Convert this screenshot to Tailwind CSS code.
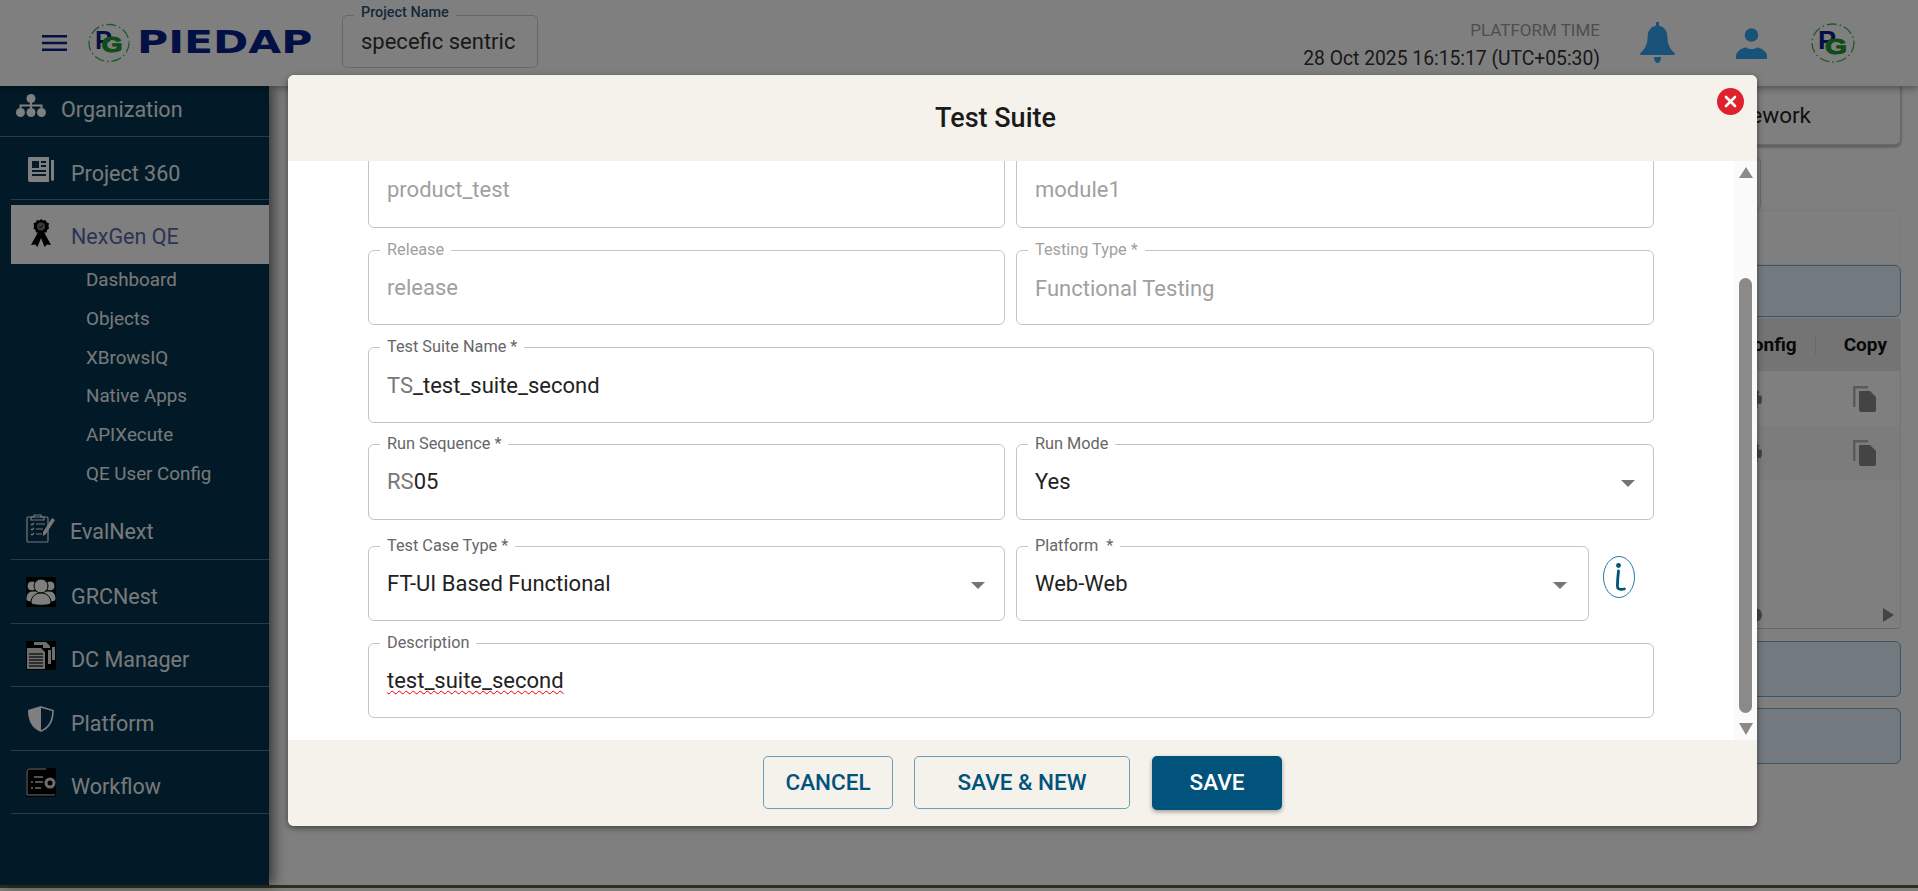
<!DOCTYPE html>
<html lang="en">
<head>
<meta charset="UTF-8">
<title>Test Suite</title>
<script src="https://cdn.jsdelivr.net/npm/@tailwindcss/browser@4"></script>
</head>
<body class="h-[891px] w-[1918px] overflow-hidden bg-white font-['Roboto',sans-serif] relative">

<!-- Page behind the dialog -->
<div class="flex flex-col h-[888px]">
  <!-- Header -->
  <header class="relative z-10 h-[86px] shrink-0 bg-white shadow-[0_2px_8px_rgba(0,0,0,0.4)] flex items-center pl-[42px] pr-[63px]">
    <svg class="w-[25px] h-[16px] shrink-0" viewBox="0 0 25 16"><path fill="#04208a" d="M0 0h25v2.4H0zM0 6.8h25v2.4H0zM0 13.6h25V16H0z"/></svg>
    <svg class="w-[42px] h-[40px] ml-[21px] shrink-0" viewBox="0 0 42 40">
      <ellipse cx="21" cy="20" rx="20" ry="18.5" fill="none" stroke="#39b54a" stroke-width="1.300" stroke-dasharray="10 3 1.500 3"/>
      <text x="7" y="26" font-family="Liberation Sans" font-weight="700" font-size="25" textLength="17" lengthAdjust="spacingAndGlyphs" fill="#04208a">P</text>
      <text x="13.500" y="29" font-family="Liberation Sans" font-weight="700" font-size="22" textLength="21" lengthAdjust="spacingAndGlyphs" fill="#1d9a31" stroke="#1d9a31" stroke-width="1">G</text>
    </svg>
    <div class="ml-[7px] w-[175px] shrink-0">
      <span class="inline-block origin-left scale-x-[1.35] font-['DejaVu_Sans'] font-bold text-[31.500px] leading-none text-[#04208a]">PIEDAP</span>
    </div>
    <div class="relative ml-[30px] mt-[-3px] w-[196px] h-[53px] shrink-0 border border-[#cfcfcf] rounded-[5px] pl-[18px] flex items-center">
      <span class="absolute left-[11px] top-[-12px] bg-white px-[7px] text-[14.400px] leading-[18px] font-medium text-[#2a5274]">Project Name</span>
      <span class="text-[22px] text-[#333]">specefic sentric</span>
    </div>
    <div class="ml-auto flex flex-col items-end mt-[5px]">
      <span class="text-[17px] leading-[20px] text-[#9c9c9c]">PLATFORM TIME</span>
      <span class="text-[19.300px] leading-[24px] mt-[7px] text-[#333]">28 Oct 2025 16:15:17 (UTC+05:30)</span>
    </div>
    <svg class="w-[35px] h-[41px] ml-[40px] shrink-0 mt-[-1px]" viewBox="0 0 35 41"><path fill="#33a4f0" d="M16 0h3v3.400c5.600 1.300 8.400 6 8.400 11.600 0 7 2.500 12 7.600 16.600 0 .8-.6 1.400-1.600 1.400H1.600C.6 33 0 32.400 0 31.600 5.100 27 7.600 22 7.600 15c0-5.600 2.800-10.300 8.400-11.600z"/><path fill="#33a4f0" d="M14 35h7c0 3.500-1.400 6-3.500 6S14 38.500 14 35z"/></svg>
    <svg class="w-[31px] h-[31px] ml-[61px] shrink-0" viewBox="0 0 31 31"><circle cx="15.500" cy="7" r="6.800" fill="#33a4f0"/><path fill="#33a4f0" d="M0 31v-3c0-4 5-8 10-8.500 1.500 1 3.500 1.500 5.500 1.500s4-.5 5.500-1.500c5 .5 10 4.500 10 8.500v3z"/></svg>
    <svg class="w-[44px] h-[40px] ml-[44px] shrink-0" viewBox="0 0 44 40">
      <ellipse cx="22" cy="20" rx="21" ry="19" fill="none" stroke="#39b54a" stroke-width="1.300" stroke-dasharray="10 3 1.500 3"/>
      <text x="7" y="26" font-family="Liberation Sans" font-weight="700" font-size="25" textLength="18" lengthAdjust="spacingAndGlyphs" fill="#04208a">P</text>
      <text x="14" y="31" font-family="Liberation Sans" font-weight="700" font-size="22" textLength="22" lengthAdjust="spacingAndGlyphs" fill="#1d9a31" stroke="#1d9a31" stroke-width="1">G</text>
    </svg>
  </header>

  <div class="flex flex-1 min-h-0">
    <!-- Sidebar -->
    <aside class="relative w-[269px] shrink-0 bg-[#04344e] shadow-[5px_0_12px_rgba(0,0,0,0.55)] text-[21.500px] text-[#eef2f5]">
      <div class="h-[51px] flex items-center border-b border-[#5a7488]">
        <svg class="w-[30px] h-[23px] ml-[16px] shrink-0 mt-[-12px]" viewBox="0 0 30 23"><g fill="#fff"><circle cx="15" cy="4.500" r="4.500"/><circle cx="4.500" cy="18.500" r="4.500"/><circle cx="15" cy="18.500" r="4.500"/><circle cx="25.500" cy="18.500" r="4.500"/></g><path d="M15 8v6M4.500 14v-2.500h21V14" fill="none" stroke="#fff" stroke-width="2"/></svg>
        <span class="ml-[15px] mt-[-2px]">Organization</span>
      </div>
      <div class="ml-[11px] h-[63px] flex items-center border-b border-[#5a7488]">
        <svg class="w-[26px] h-[25px] ml-[17px] shrink-0 mt-[2px]" viewBox="0 0 26 25"><path fill="#fff" fill-rule="evenodd" d="M1 0h20v25H2a2 2 0 0 1-2-2V1zM4 4v7h7V4zM13 4v2h5V4zM13 8v2h5V8zM4 13v2h14v-2zM4 17v2h14v-2z"/><path fill="#fff" d="M23 3h3v20a2 2 0 0 1-3 0z"/></svg>
        <span class="ml-[17px] mt-[12px]">Project 360</span>
      </div>
      <div class="ml-[11px] mt-[5px] h-[59px] flex items-center bg-white text-[#5a68a8]">
        <svg class="w-[20px] h-[28px] ml-[20px] shrink-0 mt-[-3px]" viewBox="0 0 20 28"><path fill="#000" d="M7 13 0 26l4-.5L6.500 28 10 19l3.500 9 2.500-2.500 4 .5-7-13z"/><path fill="#000" d="M10 0l2 1.500 2.500-.5 1 2.300 2.400 1L17.500 7l.5 2.500-2 1.500-.5 2.500-2.500 0L10 15l-2.500-1.500-2.500 0L4.500 11l-2-1.500.5-2.500-.4-2.700 2.400-1 1-2.300 2.500.5z"/><circle cx="10" cy="7.500" r="4" fill="#777"/><path d="M8 7.500l1.500 1.500L12 6" fill="none" stroke="#000" stroke-width="1"/></svg>
        <span class="ml-[20px] mt-[6px]">NexGen QE</span>
      </div>
      <nav class="pl-[86px] mt-[-3px] flex flex-col text-[18.800px] leading-[38.800px]">
        <span>Dashboard</span>
        <span>Objects</span>
        <span>XBrowsIQ</span>
        <span>Native Apps</span>
        <span>APIXecute</span>
        <span>QE User Config</span>
      </nav>
      <div class="ml-[11px] h-[66px] flex items-center border-b border-[#5a7488]">
        <svg class="w-[29px] h-[29px] ml-[15px] shrink-0 mt-[4px]" viewBox="0 0 29 29"><g fill="none" stroke="#eee" stroke-width="1.200"><rect x="1" y="3" width="21" height="25" rx="1"/><path d="M8 3V1h7v2h3v3H5V3z"/><path d="M5 10l1 1 2-2M5 15l1 1 2-2M5 20l1 1 2-2M10 10h9M10 15h7M10 20h6"/></g><path fill="#eee" d="M26 4l3 2-9 14-3 2 0-4z"/></svg>
        <span class="ml-[15px] mt-[12px]">EvalNext</span>
      </div>
      <div class="ml-[11px] h-[64px] flex items-center border-b border-[#5a7488]">
        <span class="w-[30px] h-[30px] ml-[15px] shrink-0 mt-[2px] bg-black flex items-center justify-center">
          <svg class="w-[30px] h-[28px]" viewBox="0 0 30 28"><g fill="#fff" stroke="#000" stroke-width="1"><circle cx="6" cy="8" r="5"/><circle cx="24" cy="8" r="5"/><path d="M0 21c0-5 3-8 6-8h18c3 0 6 3 6 8 0 2-3 3-6 3H6c-3 0-6-1-6-3z"/><circle cx="15" cy="8" r="7"/><path d="M5 25c0-6 4-10 10-10s10 4 10 10c0 3-20 3-20 0z"/></g></svg>
        </span>
        <span class="ml-[15px] mt-[11px]">GRCNest</span>
      </div>
      <div class="ml-[11px] h-[63px] flex items-center border-b border-[#5a7488]">
        <span class="w-[30px] h-[29px] ml-[15px] shrink-0 mt-[2px] bg-black flex items-center justify-center">
          <svg class="w-[30px] h-[29px]" viewBox="0 0 30 29"><g fill="#ddd"><path d="M1 7h14l4 4v17H1z"/><path d="M8 1h12l4 4v2h-7V4H8zM22 9h3v14h-3zM26 6h3v13h-3z"/></g><path stroke="#333" stroke-width="1.300" d="M3 13h14M3 16h14M3 19h14M3 22h14M3 25h14"/></svg>
        </span>
        <span class="ml-[15px] mt-[10px]">DC Manager</span>
      </div>
      <div class="ml-[11px] h-[64px] flex items-center border-b border-[#5a7488]">
        <svg class="w-[26px] h-[26px] ml-[17px] shrink-0 mt-[2px]" viewBox="0 0 26 26"><path fill="#fff" d="M13 0 0 4c0 10 3 18 13 22z"/><path fill="none" stroke="#fff" stroke-width="1.600" d="M13 1l12 3.500C25 14 22 21.500 13 25"/></svg>
        <span class="ml-[17px] mt-[11px]">Platform</span>
      </div>
      <div class="ml-[11px] h-[63px] flex items-center border-b border-[#5a7488]">
        <span class="w-[30px] h-[29px] ml-[15px] shrink-0 mt-[2px] bg-black flex items-center justify-center">
          <svg class="w-[30px] h-[29px]" viewBox="0 0 30 29"><path fill="none" stroke="#ddd" stroke-width="1" d="M1 27V3a2 2 0 0 1 2-2h17M1 27h28"/><path stroke="#ddd" stroke-width="1.500" d="M8 9h9M5 14h2M9 14h8M5 20h2M9 20h6"/><circle cx="24" cy="15" r="4" fill="none" stroke="#ddd" stroke-width="3"/></svg>
        </span>
        <span class="ml-[15px] mt-[10px]">Workflow</span>
      </div>
    </aside>

    <!-- Main content, mostly covered by the dialog -->
    <main class="flex-1 flex flex-col items-end pr-[17px] text-[#111]">
      <div class="w-[300px] h-[60px] pt-[2px] bg-white rounded-b-[6px] border-b-2 border-r border-[#cfcfcf] shadow-[0_1px_3px_rgba(0,0,0,0.4)] flex items-center justify-end pr-[89px] text-[22.500px] text-[#222]">Framework</div>
      <div class="w-[140px] h-[53px] mt-[11px] mr-[140px] border border-[#d5d5d5] rounded-[5px]"></div>
      <div class="w-[300px] h-[55px] rounded-[6px] border border-[#f2f2f2]"></div>
      <div class="w-[300px] h-[52px] bg-[#e4f2ff] border border-[#74aacc] rounded-[6px]"></div>
      <div class="w-[300px] h-[311px] mt-px border border-[#eaeaea] border-b-[#cccccc] rounded-[4px] flex flex-col">
        <div class="h-[52px] shrink-0 bg-[#e8e8e8] flex items-center justify-end font-bold text-[19px]">
          <span class="mr-[18px]">Config</span>
          <span class="w-px h-[20px] bg-[#d5d5d5]"></span>
          <span class="ml-[28px] mr-[13px]">Copy</span>
        </div>
        <div class="h-[55px] shrink-0 flex items-center pr-[24px] pl-[138px]">
          <svg class="w-[22px] h-[22px]" viewBox="0 0 22 22"><circle cx="11" cy="11" r="7" fill="none" stroke="#888" stroke-width="4"/><circle cx="11" cy="11" r="9.500" fill="none" stroke="#888" stroke-width="3" stroke-dasharray="5 3"/></svg>
          <svg class="w-[23px] h-[26px] ml-auto" viewBox="0 0 23 26"><path fill="#b4b4b4" d="M0 0h15v2.500H2.500V21H0z"/><path fill="#888" d="M6 5h11l6 6v13a2 2 0 0 1-2 2H8a2 2 0 0 1-2-2z"/></svg>
        </div>
        <div class="h-[54px] shrink-0 flex items-center pr-[24px] pl-[138px] bg-[#f8f8f8]">
          <svg class="w-[22px] h-[22px]" viewBox="0 0 22 22"><circle cx="11" cy="11" r="7" fill="none" stroke="#888" stroke-width="4"/><circle cx="11" cy="11" r="9.500" fill="none" stroke="#888" stroke-width="3" stroke-dasharray="5 3"/></svg>
          <svg class="w-[23px] h-[26px] ml-auto" viewBox="0 0 23 26"><path fill="#b4b4b4" d="M0 0h15v2.500H2.500V21H0z"/><path fill="#888" d="M6 5h11l6 6v13a2 2 0 0 1-2 2H8a2 2 0 0 1-2-2z"/></svg>
        </div>
        <div class="mt-auto h-[18px] flex items-center pr-[6px] pl-[146px] mb-[4px]">
          <span class="w-[14px] h-[14px] rounded-full bg-[#888]"></span>
          <svg class="w-[11px] h-[14px] ml-auto" viewBox="0 0 11 14"><path fill="#888" d="M0 0l11 7-11 7z"/></svg>
        </div>
      </div>
      <div class="w-[300px] h-[56px] mt-[12px] bg-[#e4f2ff] border border-[#74aacc] rounded-[6px]"></div>
      <div class="w-[300px] h-[56px] mt-[11px] bg-[#e4f2ff] border border-[#74aacc] rounded-[6px]"></div>
    </main>
  </div>
  <div class="h-[3px] shrink-0 bg-[#5a6234]"></div>
</div>

<!-- Backdrop -->
<div class="absolute inset-0 z-20 bg-black/50"></div>

<!-- Dialog -->
<section class="absolute z-30 left-[288px] top-[75px] w-[1469px] h-[751px] bg-white rounded-[6px] shadow-[0_2px_6px_rgba(0,0,0,0.5)] flex flex-col overflow-hidden">
  <div class="relative z-10 h-[86px] shrink-0 bg-[#f5f2ec] flex items-center justify-center pr-[54px] text-[27px] font-medium text-[#1a1a1a]">
    Test Suite
    <button class="absolute right-[13px] top-[13px] w-[27px] h-[27px] rounded-full bg-[#e0202c] flex items-center justify-center">
      <svg class="w-[13px] h-[13px]" viewBox="0 0 13 13"><path d="M2 2l9 9M11 2l-9 9" stroke="#fff" stroke-width="2.600" stroke-linecap="round"/></svg>
    </button>
  </div>

  <div class="relative flex-1 min-h-0 pl-[80px] pr-[103px] text-[22px] text-[#222]">
    <div class="mt-[-9px] grid grid-cols-[637px_638px] gap-x-[11px] h-[76px]">
      <div class="border border-[#c4c4c4] rounded-[6px] pl-[18px] pt-[20px] text-[#a0a0a0]">product_test</div>
      <div class="border border-[#c4c4c4] rounded-[6px] pl-[18px] pt-[20px] text-[#a0a0a0]">module1</div>
    </div>

    <div class="mt-[22px] grid grid-cols-[637px_638px] gap-x-[11px] h-[75px]">
      <div class="relative border border-[#c4c4c4] rounded-[6px] pl-[18px] pt-[20px] text-[#a0a0a0]">
        <span class="absolute left-[11px] top-[-10px] bg-white px-[7px] text-[16.300px] leading-[18px] text-[#a0a0a0]">Release</span>
        release
      </div>
      <div class="relative border border-[#c4c4c4] rounded-[6px] pl-[18px] pt-[21px] text-[#a0a0a0]">
        <span class="absolute left-[11px] top-[-10px] bg-white px-[7px] text-[16.300px] leading-[18px] text-[#a0a0a0]">Testing Type *</span>
        Functional Testing
      </div>
    </div>

    <div class="relative mt-[22px] h-[76px] border border-[#c4c4c4] rounded-[6px] pl-[18px] pt-[21px]">
      <span class="absolute left-[11px] top-[-10px] bg-white px-[7px] text-[16.300px] leading-[18px] text-[#666]">Test Suite Name *</span>
      <span class="text-[#777]">TS</span>_test_suite_second
    </div>

    <div class="mt-[21px] grid grid-cols-[637px_638px] gap-x-[11px] h-[76px]">
      <div class="relative border border-[#c4c4c4] rounded-[6px] pl-[18px] pt-[20px]">
        <span class="absolute left-[11px] top-[-10px] bg-white px-[7px] text-[16.300px] leading-[18px] text-[#666]">Run Sequence *</span>
        <span class="text-[#777]">RS</span>05
      </div>
      <div class="relative border border-[#c4c4c4] rounded-[6px] pl-[18px] pt-[20px]">
        <span class="absolute left-[11px] top-[-10px] bg-white px-[7px] text-[16.300px] leading-[18px] text-[#666]">Run Mode</span>
        Yes
        <span class="absolute right-[18px] top-[35px] border-x-[7px] border-t-[7px] border-x-transparent border-t-[#757575]"></span>
      </div>
    </div>

    <div class="mt-[26px] flex gap-x-[11px] h-[75px]">
      <div class="relative w-[637px] shrink-0 border border-[#c4c4c4] rounded-[6px] pl-[18px] pt-[20px]">
        <span class="absolute left-[11px] top-[-10px] bg-white px-[7px] text-[16.300px] leading-[18px] text-[#666]">Test Case Type *</span>
        FT-UI Based Functional
        <span class="absolute right-[19px] top-[35px] border-x-[7px] border-t-[7px] border-x-transparent border-t-[#757575]"></span>
      </div>
      <div class="relative w-[573px] shrink-0 border border-[#c4c4c4] rounded-[6px] pl-[18px] pt-[20px]">
        <span class="absolute left-[11px] top-[-10px] bg-white px-[7px] text-[16.300px] leading-[18px] text-[#666]">Platform&nbsp; *</span>
        Web-Web
        <span class="absolute right-[21px] top-[35px] border-x-[7px] border-t-[7px] border-x-transparent border-t-[#757575]"></span>
      </div>
      <svg class="w-[32px] h-[42px] ml-[3px] mt-[10px] shrink-0" viewBox="0 0 32 42"><ellipse cx="16" cy="21" rx="15.500" ry="20.500" fill="none" stroke="#2c7ba8" stroke-width="1"/><circle cx="15.500" cy="9.500" r="2.400" fill="#02537c"/><path d="M15.500 15c-.6 5-1 10-1.100 15-.1 3 2 4 7 3" fill="none" stroke="#02537c" stroke-width="2.800" stroke-linecap="round"/></svg>
    </div>

    <div class="relative mt-[22px] h-[75px] border border-[#c4c4c4] rounded-[6px] pl-[18px] pt-[20px]">
      <span class="absolute left-[11px] top-[-10px] bg-white px-[7px] text-[16.300px] leading-[18px] text-[#666]">Description</span>
      <span class="underline decoration-wavy decoration-[#f00000] decoration-1 underline-offset-2">test_suite_second</span>
    </div>

    <!-- Scrollbar -->
    <div class="absolute right-0 top-0 bottom-0 w-[23px] bg-[#fafafa] flex flex-col items-center">
      <span class="mt-[6px] border-x-[7.500px] border-b-[11px] border-x-transparent border-b-[#8a8a8a]"></span>
      <span class="mt-[100px] w-[13px] h-[435px] rounded-[7px] bg-[#8a8a8a]"></span>
      <span class="mt-[10px] border-x-[7.500px] border-t-[12px] border-x-transparent border-t-[#8a8a8a]"></span>
    </div>
  </div>

  <div class="h-[86px] shrink-0 bg-[#f5f2ec] flex justify-center items-start pt-[16px] text-[22.500px] font-medium">
    <button class="w-[130px] h-[53px] border border-[#6a9fbb] rounded-[5px] text-[#02537c]">CANCEL</button>
    <button class="w-[216px] h-[53px] ml-[21px] border border-[#6a9fbb] rounded-[5px] text-[#02537c]">SAVE &amp; NEW</button>
    <button class="w-[130px] h-[54px] ml-[22px] rounded-[5px] bg-[#02537c] text-white shadow-[0_2px_4px_rgba(0,0,0,0.35)]">SAVE</button>
  </div>
</section>

</body>
</html>
